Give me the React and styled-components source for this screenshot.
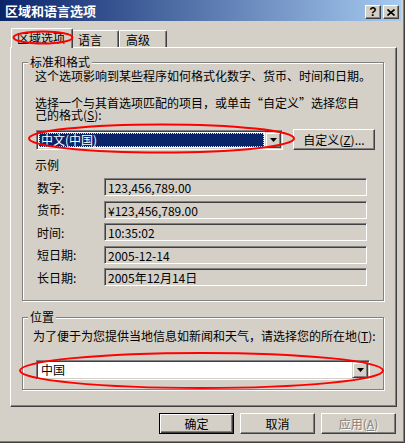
import React from 'react';
import styled, { createGlobalStyle } from 'styled-components';

const GlobalStyle = createGlobalStyle`
  html, body {
    margin: 0;
    padding: 0;
    background: #d4d0c8;
  }
  body {
    font-family: "Noto Sans CJK SC", "Liberation Sans", sans-serif;
    font-size: 12px;
    color: #000;
  }
  * { box-sizing: border-box; }
`;

const Window = styled.div`
  position: relative;
  width: 405px;
  height: 443px;
  background: #d4d0c8;
  display: flex;
  flex-direction: column;
  box-shadow: inset -1px -1px 0 #404040, inset -2px -2px 0 #808080;
  overflow: hidden;
`;

const TitleBar = styled.div`
  height: 21px;
  width: 401px;
  display: flex;
  align-items: center;
  padding: 0 2px 0 5px;
  background: linear-gradient(to right, #0a246a, #a6caf0);
`;

const Title = styled.div`
  flex: 1;
  color: #fff;
  font-weight: bold;
  font-size: 13px;
  line-height: 13px;
`;

const CaptionButton = styled.div`
  width: 16px;
  height: 14px;
  margin-top: 3px;
  margin-left: ${p => (p.$gap ? '2px' : '0')};
  display: flex;
  align-items: center;
  justify-content: center;
  background: #d4d0c8;
  border: 1px solid;
  border-color: #fff #404040 #404040 #fff;
  box-shadow: inset -1px -1px 0 #808080;
  font-family: "Liberation Sans", sans-serif;
  font-weight: bold;
  font-size: 12px;
  line-height: 12px;
`;

const Body = styled.div`
  padding: 7px 8px 0 10px;
  display: flex;
  flex-direction: column;
`;

const TabStrip = styled.div`
  height: 19px;
  display: flex;
  align-items: flex-end;
  padding-left: 3px;
`;

const Tab = styled.div`
  position: relative;
  z-index: ${p => (p.$active ? 2 : 1)};
  width: ${p => p.$w + (p.$active ? 4 : 0)}px;
  height: ${p => (p.$active ? 20 : 17)}px;
  margin: ${p => (p.$active ? '0 -2px -1px -2px' : '0')};
  padding-left: ${p => p.$pad + (p.$active ? 2 : 0)}px;
  padding-top: 3px;
  line-height: 12px;
  background: #d4d0c8;
  border-top: 1px solid #fff;
  border-left: 1px solid #fff;
  border-right: 1px solid #404040;
  border-radius: 2px 2px 0 0;
  box-shadow: inset -1px 0 0 #808080;
  white-space: nowrap;
`;

const Panel = styled.div`
  height: 360px;
  padding: 0 12px 0 11px;
  border: 1px solid;
  border-color: #fff #404040 #404040 #fff;
  box-shadow: inset -1px -1px 0 #808080;
  display: flex;
  flex-direction: column;
`;

const GroupBox = styled.div`
  margin-top: ${p => p.$top}px;
  border: 1px solid #808080;
  box-shadow: inset 1px 1px 0 #fff, 1px 1px 0 #fff;
  padding: 0 8px ${p => p.$bottom}px 12px;
  display: flex;
  flex-direction: column;
`;

const Legend = styled.div`
  align-self: flex-start;
  margin: -7px 0 0 -7px;
  padding: 0 2px;
  line-height: 12px;
  background: #d4d0c8;
`;

const Text = styled.div`
  margin-top: ${p => p.$top || 0}px;
  margin-left: ${p => p.$left || 0}px;
  line-height: ${p => p.$lh || 13}px;
  white-space: nowrap;
`;

const Row = styled.div`
  margin-top: ${p => p.$top || 0}px;
  display: flex;
  align-items: center;
  gap: ${p => p.$gap || 0}px;
`;

const Combo = styled.div`
  width: ${p => p.$w}px;
  height: 20px;
  margin-left: 1px;
  display: flex;
  align-items: center;
  padding: 2px;
  background: #fff;
  border: 1px solid;
  border-color: #808080 #fff #fff #808080;
  box-shadow: inset 1px 1px 0 #404040, inset -1px -1px 0 #d4d0c8;
`;

const ComboValue = styled.div`
  flex: 1;
  height: 14px;
  margin-right: 1px;
  padding-left: 1px;
  line-height: 12px;
  color: ${p => (p.$selected ? '#fff' : '#000')};
  background: ${p => (p.$selected ? '#0a246a' : 'transparent')};
  border: 1px dotted ${p => (p.$selected ? '#e8e890' : 'transparent')};
`;

const ArrowButton = styled.div`
  width: 16px;
  height: 16px;
  margin-right: -1px;
  display: flex;
  align-items: center;
  justify-content: center;
  background: #d4d0c8;
  border: 1px solid;
  border-color: #d4d0c8 #404040 #404040 #d4d0c8;
  box-shadow: inset 1px 1px 0 #fff, inset -1px -1px 0 #808080;
`;

const Button = styled.div`
  width: ${p => p.$w || 75}px;
  height: 21px;
  display: flex;
  align-items: center;
  justify-content: center;
  background: #d4d0c8;
  line-height: 12px;
  border: 1px solid;
  border-color: ${p => (p.$default ? '#000' : '#fff #404040 #404040 #fff')};
  box-shadow: ${p =>
    p.$default
      ? 'inset 1px 1px 0 #fff, inset -1px -1px 0 #404040, inset -2px -2px 0 #808080'
      : 'inset -1px -1px 0 #808080'};
  color: ${p => (p.$disabled ? '#808080' : '#000')};
  text-shadow: ${p => (p.$disabled ? '1px 1px 0 #fff' : 'none')};
`;

const SampleList = styled.div`
  margin-top: 7px;
  padding-left: 2px;
  display: flex;
  flex-direction: column;
  gap: 4.5px;
`;

const SampleRow = styled.div`
  display: flex;
  align-items: center;
  height: 18px;
`;

const SampleLabel = styled.div`
  width: 67px;
  line-height: 13px;
`;

const SampleField = styled.div`
  width: 263px;
  height: 18px;
  padding: 2px 0 0 3px;
  line-height: 13px;
  border: 1px solid;
  border-color: #808080 #fff #fff #808080;
  box-shadow: inset 1px 1px 0 #404040, inset -1px -1px 0 #d4d0c8;
  white-space: nowrap;
`;

const ButtonRow = styled.div`
  margin-top: 6px;
  padding-right: 1px;
  display: flex;
  justify-content: flex-end;
  gap: 6px;
`;

const Overlay = styled.svg`
  position: absolute;
  left: 0;
  top: 0;
  pointer-events: none;
  z-index: 10;
`;

const Arrow = () => (
  <svg width="7" height="4" viewBox="0 0 7 4">
    <path d="M0 0h7L3.5 4z" fill="#000" />
  </svg>
);

const samples = [
  ['数字:', '123,456,789.00'],
  ['货币:', '¥123,456,789.00'],
  ['时间:', '10:35:02'],
  ['短日期:', '2005-12-14'],
  ['长日期:', '2005年12月14日'],
];

export default function App() {
  return (
    <>
      <GlobalStyle />
      <Window>
        <TitleBar>
          <Title>区域和语言选项</Title>
          <CaptionButton>?</CaptionButton>
          <CaptionButton $gap>
            <svg width="8" height="7" viewBox="0 0 8 7">
              <path d="M0.5 0.5L7.5 6.5M7.5 0.5L0.5 6.5" stroke="#000" strokeWidth="1.6" />
            </svg>
          </CaptionButton>
        </TitleBar>
        <Body>
          <TabStrip>
            <Tab $active $w={58} $pad={3}>区域选项</Tab>
            <Tab $w={48} $pad={6}>语言</Tab>
            <Tab $w={48} $pad={6}>高级</Tab>
          </TabStrip>
          <Panel>
            <GroupBox $top={14} $bottom={14}>
              <Legend>标准和格式</Legend>
              <Text $top={1}>这个选项影响到某些程序如何格式化数字、货币、时间和日期。</Text>
              <Text $top={15} $lh={12}>
                选择一个与其首选项匹配的项目，或单击“自定义”选择您自
                <br />
                己的格式(<u>S</u>):
              </Text>
              <Row $top={8} $gap={10}>
                <Combo $w={247}>
                  <ComboValue $selected>中文(中国)</ComboValue>
                  <ArrowButton><Arrow /></ArrowButton>
                </Combo>
                <Button $w={82}>自定义(<u>Z</u>)...</Button>
              </Row>
              <Text $top={8}>示例</Text>
              <SampleList>
                {samples.map(([label, value]) => (
                  <SampleRow key={label}>
                    <SampleLabel>{label}</SampleLabel>
                    <SampleField>{value}</SampleField>
                  </SampleRow>
                ))}
              </SampleList>
            </GroupBox>
            <GroupBox $top={16} $bottom={9}>
              <Legend>位置</Legend>
              <Text $top={6} $left={-2}>
                为了便于为您提供当地信息如新闻和天气，请选择您的所在地(<u>T</u>):
              </Text>
              <Row $top={18}>
                <Combo $w={334}>
                  <ComboValue>中国</ComboValue>
                  <ArrowButton><Arrow /></ArrowButton>
                </Combo>
              </Row>
            </GroupBox>
          </Panel>
          <ButtonRow>
            <Button $default>确定</Button>
            <Button>取消</Button>
            <Button $disabled>应用(<u>A</u>)</Button>
          </ButtonRow>
        </Body>
        <Overlay width="405" height="443" viewBox="0 0 405 443">
          <g fill="none" stroke="#ff0000" strokeWidth="2">
            <ellipse cx="43" cy="37.5" rx="29.5" ry="6" />
            <ellipse cx="161.5" cy="138.5" rx="132.5" ry="14" />
            <ellipse cx="201.5" cy="370.5" rx="181.5" ry="17.5" />
          </g>
        </Overlay>
      </Window>
    </>
  );
}
